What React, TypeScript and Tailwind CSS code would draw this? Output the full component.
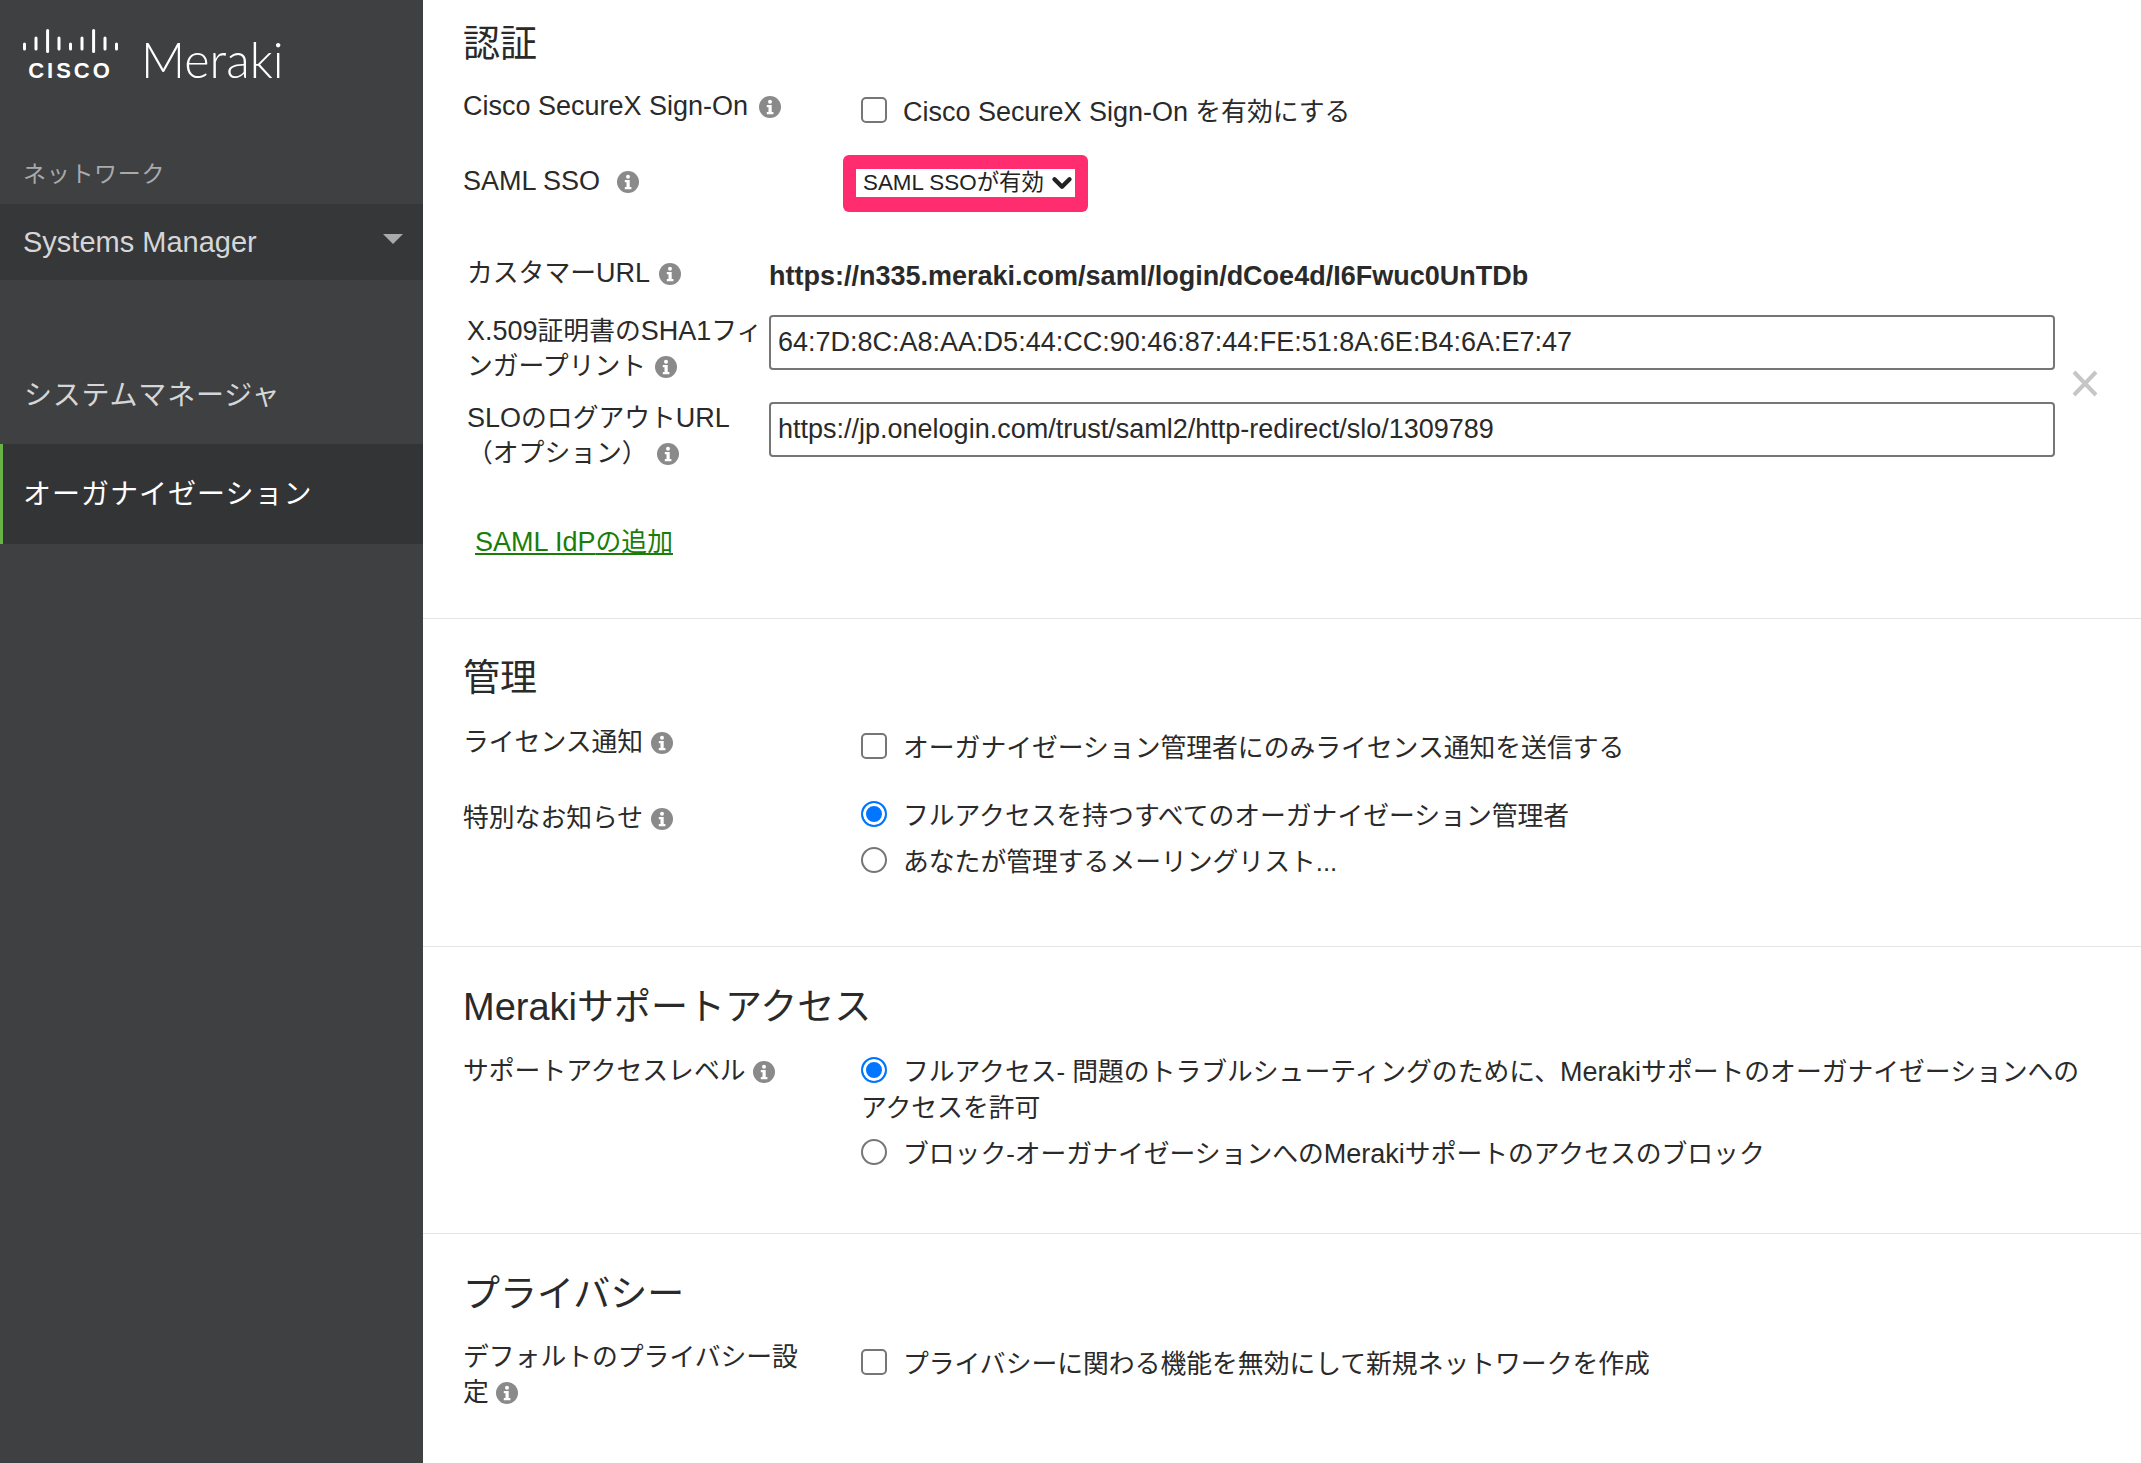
import { ChevronDown } from "lucide-react";

const jp = "font-['Liberation_Sans','Noto_Sans_CJK_JP',sans-serif]";

const InfoIcon = ({ className = "" }: { className?: string }) => (
  <svg viewBox="0 0 22 22" className={`inline-block w-[22px] h-[22px] align-[-3px] ${className}`}>
    <circle cx="11" cy="11" r="11" fill="#8a8a8a" />
    <circle cx="11" cy="5.8" r="2" fill="#fff" />
    <path d="M7.8 9h4.9v7h1.7v2.2H7.8V16h1.7v-4.8H7.8z" fill="#fff" />
  </svg>
);

const CiscoBars = () => (
  <svg viewBox="0 0 95 24" className="w-[95px] h-[24px]">
    {[
      [1.5, 15, 20],
      [13, 9, 20],
      [24.6, 1.5, 22.5],
      [36, 9, 20],
      [47.5, 15, 20],
      [59, 9, 20],
      [70.6, 1.5, 22.5],
      [82, 9, 20],
      [93.5, 15, 20],
    ].map(([x, y1, y2]) => (
      <line key={x} x1={x} x2={x} y1={y1} y2={y2} stroke="#fff" strokeWidth="3" strokeLinecap="round" />
    ))}
  </svg>
);

// latin runs sit a bit larger than the kana around them
const L = ({ children }: { children: React.ReactNode }) => <span className="text-[27px]">{children}</span>;

const Heading = ({ children }: { children: React.ReactNode }) => (
  <h2 className="text-[37px] leading-[48px] text-[#2a2a2a] font-normal">{children}</h2>
);

const Row = ({ label, children, className = "" }: { label: React.ReactNode; children: React.ReactNode; className?: string }) => (
  <div className={`grid grid-cols-[398px_1fr] ${className}`}>
    <div className="w-[345px]">{label}</div>
    <div>{children}</div>
  </div>
);

const Checkbox = ({ children }: { children: React.ReactNode }) => (
  <label className="block">
    <input
      type="checkbox"
      className="appearance-none inline-block w-[26px] h-[26px] m-0 mr-[16px] align-[-2px] bg-white border-2 border-[#767676] rounded-[5px]"
    />
    {children}
  </label>
);

const Radio = ({ children, name, checked }: { children: React.ReactNode; name: string; checked?: boolean }) => (
  <label className="block">
    <input
      type="radio"
      name={name}
      defaultChecked={checked}
      className="appearance-none inline-block w-[26px] h-[26px] m-0 mr-[16px] align-[-2px] bg-white border-2 border-[#767676] rounded-full checked:border-[#0075ff] checked:bg-[#0075ff] checked:shadow-[inset_0_0_0_3px_#fff]"
    />
    {children}
  </label>
);

const App = () => {
  return (
    <div className={`flex w-[2141px] h-[1463px] overflow-hidden bg-white text-[25.8px] leading-[35px] text-[#2a2a2a] ${jp}`}>
      {/* Sidebar */}
      <aside className="w-[423px] shrink-0 bg-[#3f4042] text-[#d5d6d8]">
        <div className="flex items-start pl-[23px] pt-[29px] h-[152px]">
          <div className="w-[118px]">
            <CiscoBars />
            <div className="w-[95px] mt-[6px] text-center text-[22px] leading-[24px] font-bold tracking-[3px] text-white">CISCO</div>
          </div>
          <span className="font-['Lato',sans-serif] font-light text-[48.5px] leading-[60px] text-white">Meraki</span>
        </div>
        <div className="pl-[23px] h-[52px] text-[23px] leading-[44px] tracking-[0.7px] text-[#a9aaac]">ネットワーク</div>
        <div className="flex items-center justify-between h-[76px] pl-[23px] pr-[20px] bg-[#363739] text-[29px]">
          <span>Systems Manager</span>
          <span className="mb-[6px] border-x-[10px] border-t-[10px] border-x-transparent border-t-[#a9aaac]" />
        </div>
        <div className="mt-[72px] flex items-center h-[92px] pb-[6px] pl-[24px] text-[28px] tracking-[0.8px]">システムマネージャ</div>
        <div className="flex items-center h-[100px] pl-[20px] border-l-[3px] border-[#67b346] bg-[#333436] text-[28px] tracking-[1px] text-white">
          オーガナイゼーション
        </div>
      </aside>

      {/* Main */}
      <main className="flex-1 min-w-0">
        <section className="h-[619px] pl-[40px] pt-[21px] border-b border-[#e4e4e4]">
          <Heading>認証</Heading>
          <Row label={<><L>Cisco SecureX Sign-On</L> <InfoIcon className="ml-[4px]" /></>} className="mt-[20px]">
            <div className="pt-[6px]">
              <Checkbox><L>Cisco SecureX Sign-On</L> を有効にする</Checkbox>
            </div>
          </Row>
          <Row label={<><L>SAML SSO</L> <InfoIcon className="ml-[10px]" /></>} className="mt-[34px]">
            <div className="-ml-[18px] -mt-[9px] w-[245px] h-[57px] px-[13px] py-[14px] rounded-[6px] bg-[#ff2d6f]">
              <div className="relative">
                <select className="block w-full h-[29px] pl-[7px] appearance-none bg-white border-b border-[#777] text-[22.4px] leading-[28px] text-[#222] rounded-none outline-none">
                  <option>SAML SSOが有効</option>
                </select>
                <ChevronDown className="absolute -right-[2px] -top-[1px] w-[30px] h-[30px] text-[#222] pointer-events-none" strokeWidth={3.5} />
              </div>
            </div>
          </Row>
          <div className="grid grid-cols-[302px_1fr] pl-[4px] mt-[44px]">
            <div>
              カスタマー<L>URL</L> <InfoIcon className="ml-[2px]" />
            </div>
            <div className="pt-[3px] text-[27px] font-bold">https://n335.meraki.com/saml/login/dCoe4d/I6Fwuc0UnTDb</div>
          </div>
          <div className="flex items-center mt-[21px]">
            <div className="w-[1592px] flex flex-col gap-[18px] pl-[4px]">
              <div className="grid grid-cols-[302px_1fr]">
                <div className="whitespace-nowrap -mt-[1px]">
                  <L>X.509</L>証明書の<L>SHA1</L>フィ
                  <br />
                  ンガープリント <InfoIcon className="ml-[2px]" />
                </div>
                <input
                  readOnly
                  value="64:7D:8C:A8:AA:D5:44:CC:90:46:87:44:FE:51:8A:6E:B4:6A:E7:47"
                  className="h-[55px] px-[7px] border-2 border-[#767676] rounded-[4px] text-[27px] text-[#2a2a2a] outline-none"
                />
              </div>
              <div className="grid grid-cols-[302px_1fr]">
                <div className="whitespace-nowrap -mt-[1px]">
                  <L>SLO</L>のログアウト<L>URL</L>
                  <br />
                  （オプション） <InfoIcon className="ml-[2px]" />
                </div>
                <input
                  readOnly
                  value="https://jp.onelogin.com/trust/saml2/http-redirect/slo/1309789"
                  className="h-[55px] px-[7px] border-2 border-[#767676] rounded-[4px] text-[27px] text-[#2a2a2a] outline-none"
                />
              </div>
            </div>
            <svg viewBox="0 0 26 27" className="ml-[17px] w-[26px] h-[27px] -mt-[20px]">
              <path d="M2 2l22 23M24 2L2 25" stroke="#c6c6c6" strokeWidth="4" fill="none" />
            </svg>
          </div>
          <a href="#" className="inline-block ml-[12px] mt-[54px] text-[#1a7d0a] underline">
            <L>SAML IdP</L>の追加
          </a>
        </section>

        <section className="h-[328px] pl-[40px] pt-[36px] border-b border-[#e4e4e4]">
          <Heading>管理</Heading>
          <Row label={<>ライセンス通知 <InfoIcon className="ml-[1px]" /></>} className="mt-[22px]">
            <div className="pt-[6px]">
              <Checkbox>オーガナイゼーション管理者にのみライセンス通知を送信する</Checkbox>
            </div>
          </Row>
          <Row label={<>特別なお知らせ <InfoIcon className="ml-[1px]" /></>} className="mt-[35px]">
            <div className="-mt-[2px]">
              <Radio name="notice" checked>フルアクセスを持つすべてのオーガナイゼーション管理者</Radio>
              <div className="mt-[11px]">
                <Radio name="notice">あなたが管理するメーリングリスト...</Radio>
              </div>
            </div>
          </Row>
        </section>

        <section className="h-[287px] pl-[40px] pt-[36px] border-b border-[#e4e4e4]">
          <Heading><span className="text-[38px]">Meraki</span>サポートアクセス</Heading>
          <Row label={<>サポートアクセスレベル <InfoIcon /></>} className="mt-[22px]">
            <div className="pr-[40px] leading-[36px]">
              <Radio name="support" checked>
                フルアクセス- 問題のトラブルシューティングのために、<L>Meraki</L>サポートのオーガナイゼーションへのアクセスを許可
              </Radio>
              <div className="mt-[10px]">
                <Radio name="support">ブロック-オーガナイゼーションへの<L>Meraki</L>サポートのアクセスのブロック</Radio>
              </div>
            </div>
          </Row>
        </section>

        <section className="pl-[40px] pt-[37px]">
          <Heading>プライバシー</Heading>
          <Row label={<>デフォルトのプライバシー設定 <InfoIcon /></>} className="mt-[21px]">
            <div className="pt-[7px]">
              <Checkbox>プライバシーに関わる機能を無効にして新規ネットワークを作成</Checkbox>
            </div>
          </Row>
        </section>
      </main>
    </div>
  );
};

export default App;
